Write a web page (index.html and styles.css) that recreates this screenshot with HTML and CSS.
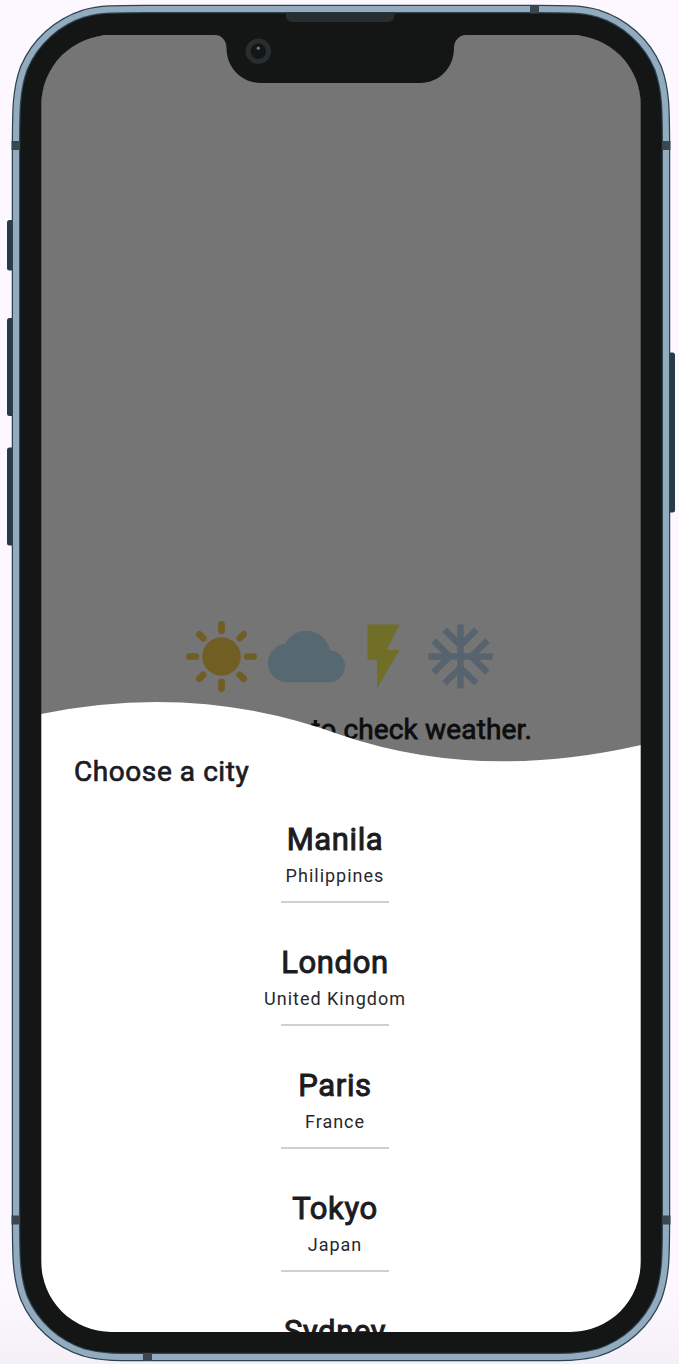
FILE: index.html
```
<!DOCTYPE html>
<html lang="en">
<head>
<meta charset="utf-8">
<title>Weather</title>
<link rel="stylesheet" href="styles.css">
</head>
<body>
<div class="device">
  <main class="screen">
    <section class="home">
      <div class="icons">
        <svg class="icon sun" viewBox="0 0 24 24"><circle cx="12" cy="12" r="6"/><path d="M2 12H4M20 12H22M12 2V4M12 20V22M5.1 5.1L6.3 6.3M17.7 17.7L18.9 18.9M5.1 18.9L6.3 17.7M17.7 6.3L18.9 5.1"/></svg>
        <svg class="icon cloud" viewBox="0 0 24 24"><path d="M19.35 10.04C18.67 6.59 15.64 4 12 4 9.11 4 6.6 5.64 5.35 8.04 2.34 8.36 0 10.91 0 14c0 3.31 2.69 6 6 6h13c2.76 0 5-2.24 5-5 0-2.64-2.05-4.78-4.65-4.96z"/></svg>
        <svg class="icon bolt" viewBox="0 0 24 24"><path d="M7 2v11h3v9l7-12h-4l4-8z"/></svg>
        <svg class="icon snow" viewBox="0 0 24 24"><path d="M22 11h-4.17l3.24-3.24-1.41-1.42L15 11h-2V9l4.66-4.66-1.42-1.41L13 6.17V2h-2v4.17L7.76 2.93 6.34 4.34 11 9v2H9L4.34 6.34 2.93 7.76 6.17 11H2v2h4.17l-3.24 3.24 1.41 1.42L9 13h2v2l-4.66 4.66 1.42 1.41L11 17.83V22h2v-4.17l3.24 3.24 1.42-1.41L13 15v-2h2l4.66 4.66 1.41-1.42L17.83 13H22z"/></svg>
      </div>
      <p class="hint">to check weather.</p>
    </section>
    <section class="sheet">
      <svg class="wave" viewBox="0 0 600 70"><path d="M0 14Q156-18 300 35Q438 82 600 45V70H0Z"/></svg>
      <div class="panel">
        <h1 class="title">Choose a city</h1>
        <ul class="cities">
          <li class="city"><h2 class="name">Manila</h2><p class="country">Philippines</p></li>
          <li class="city"><h2 class="name">London</h2><p class="country">United Kingdom</p></li>
          <li class="city"><h2 class="name">Paris</h2><p class="country">France</p></li>
          <li class="city"><h2 class="name">Tokyo</h2><p class="country">Japan</p></li>
          <li class="city"><h2 class="name">Sydney</h2></li>
        </ul>
      </div>
    </section>
  </main>
  <svg class="frame" viewBox="0 0 679 1364">
    <defs>
      <path id="body" d="M16 150C16 110 16 90 24 68C35 42 57 22 84 13.5C100 9 115 9 145 9H537C567 9 582 9 598 13.5C625 22 647 42 658 68C666 90 666 110 666 150V1216C666 1256 666 1276 658 1298C647 1324 625 1344 598 1352.500C582 1357 567 1357 537 1357H145C115 1357 100 1357 84 1352.500C57 1344 35 1324 24 1298C16 1276 16 1256 16 1216Z"/>
    </defs>
    <g class="button">
      <rect x="7" y="220" width="10" height="50.500" rx="2.500"/>
      <rect x="7" y="318" width="10" height="98" rx="2.500"/>
      <rect x="7" y="447.500" width="10" height="98" rx="2.500"/>
      <rect x="665" y="352.500" width="10" height="160" rx="2.500"/>
    </g>
    <path class="bezel" fill-rule="evenodd" d="M16 150C16 110 16 90 24 68C35 42 57 22 84 13.5C100 9 115 9 145 9H537C567 9 582 9 598 13.5C625 22 647 42 658 68C666 90 666 110 666 150V1216C666 1256 666 1276 658 1298C647 1324 625 1344 598 1352.500C582 1357 567 1357 537 1357H145C115 1357 100 1357 84 1352.500C57 1344 35 1324 24 1298C16 1276 16 1256 16 1216ZM111 35A70 70 0 0 0 41.300 105V1262A70 70 0 0 0 111 1332H571A70 70 0 0 0 640.700 1262V105A70 70 0 0 0 571 35H466C459 35 454 41 454 48C454 68 439 83 420 83H261C242 83 226.500 68 226.500 48C226.500 41 222 35 215 35Z"/>
    <use href="#body" class="edge"/>
    <use href="#body" class="metal"/>
    <g class="antenna">
      <rect x="530" y="5.500" width="9" height="8"/>
      <rect x="143" y="1353" width="9" height="8"/>
      <rect x="11.500" y="141" width="8.500" height="9"/>
      <rect x="662.500" y="141" width="8" height="9"/>
      <rect x="11.500" y="1215.500" width="8.500" height="9"/>
      <rect x="662.500" y="1215.500" width="8" height="9"/>
    </g>
    <path class="speaker" d="M286 12.500H394.500V15Q394.500 22 387.500 22H293Q286 22 286 15Z"/>
    <circle class="lens" cx="258.300" cy="51.300" r="10.200"/>
    <circle class="glint" cx="258.300" cy="48.200" r="1.600"/>
  </svg>
</div>
</body>
</html>
```
FILE: styles.css
```
* { box-sizing: border-box; margin: 0; padding: 0; }
body {
  font-family: Roboto, "Liberation Sans", sans-serif;
  background: linear-gradient(#fdf8ff 0 1290px, #f5f0f7 1364px);
}
.device { position: relative; width: 679px; height: 1364px; padding: 35px 38px 32px 41px; overflow: hidden; }
.screen { position: relative; width: 600px; height: 1297px; background: #757575; border-radius: 70px; overflow: hidden; }
.home { padding-top: 582.5px; }
.icons { display: flex; justify-content: center; }
.icon { display: block; width: 77px; height: 77px; }
.sun { margin-right: 7.3px; fill: #715e23; stroke: #715e23; stroke-width: 2.1; stroke-linecap: round; }
.sun circle { stroke: none; }
.cloud { fill: #566870; }
.bolt { fill: #716e28; }
.snow { fill: #576470; }
.hint {
  margin-top: 18px;
  padding-right: 109px;
  text-align: right;
  font-size: 28px;
  line-height: 34px;
  letter-spacing: 0.15px;
  color: #0c0d0e;
  -webkit-text-stroke: 0.8px #0c0d0e;
}
.sheet { position: absolute; left: 0; right: 0; top: 665px; bottom: 0; }
.wave { display: block; width: 600px; height: 70px; fill: #fff; }
/* The panel overlaps the lower half of the wave, so its top strip stays clear. */
.panel {
  display: flow-root;
  height: 598px;
  margin-top: -36px;
  padding-right: 12px;
  background: linear-gradient(transparent 35px, #fff 35px);
  position: relative;
}
.title {
  padding: 21px 0 0 33px;
  font-size: 28px;
  font-weight: 400;
  line-height: 34px;
  letter-spacing: 0.57px;
  color: #1c1b1f;
  -webkit-text-stroke: 0.7px #1c1b1f;
}
.cities { list-style: none; padding-top: 31px; }
.city { display: flex; flex-direction: column; align-items: center; height: 123px; }
.city::after { content: ""; width: 108px; height: 2px; margin-top: 13px; background: #cfced4; }
.city:last-child { height: auto; }
.city:last-child::after { display: none; }
.name {
  font-size: 31px;
  font-weight: 400;
  line-height: 40px;
  letter-spacing: 0.6px;
  color: #1c1b1f;
  -webkit-text-stroke: 1px #1c1b1f;
}
.country { margin-top: 4px; font-size: 18px; line-height: 24px; letter-spacing: 1px; color: #28272b; }
.frame { position: absolute; left: 0; top: 0; width: 679px; height: 1364px; }
.button { fill: #263a47; }
.bezel { fill: #141615; }
.edge { fill: none; stroke: #2c424f; stroke-width: 8.5; }
.metal { fill: none; stroke: #93abbf; stroke-width: 6; }
.antenna { fill: #3b474e; }
.speaker { fill: #272e2f; }
.lens { fill: none; stroke: #272e2f; stroke-width: 5; }
.glint { fill: #737777; }
```
